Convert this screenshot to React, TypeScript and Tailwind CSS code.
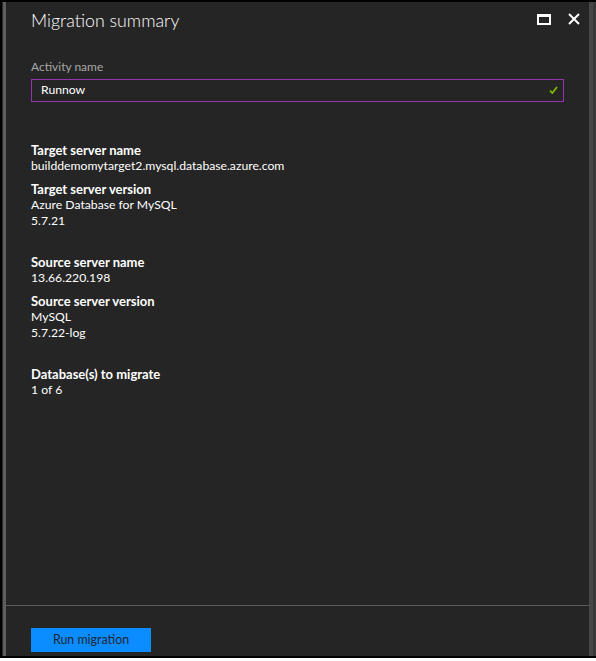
import React from "react";

type Field = { label: string; values: string[] };

const sections: Field[][] = [
  [
    { label: "Target server name", values: ["builddemomytarget2.mysql.database.azure.com"] },
    { label: "Target server version", values: ["Azure Database for MySQL", "5.7.21"] },
  ],
  [
    { label: "Source server name", values: ["13.66.220.198"] },
    { label: "Source server version", values: ["MySQL", "5.7.22-log"] },
  ],
  [{ label: "Database(s) to migrate", values: ["1 of 6"] }],
];

function SummaryField({ field }: { field: Field }) {
  return (
    <div className="flex flex-col">
      <div className="text-[13px] font-bold text-white">{field.label}</div>
      {field.values.map((v) => (
        <div key={v} className="text-[12.2px] text-white">
          {v}
        </div>
      ))}
    </div>
  );
}

export default function App() {
  return (
    <div
      className="flex h-[661px] w-[596px] flex-col bg-black"
      style={{ fontFamily: "Lato, 'Open Sans', sans-serif" }}
    >
      <div className="flex min-h-0 flex-1 pl-[2px] pt-[2px]">
        <div className="w-[1px] bg-[#2a2a2a]" />
        <div className="w-[3px] bg-[#5e5e5e]" />

        <main className="flex min-w-0 flex-1 flex-col bg-[#252525]">
          {/* header */}
          <div className="flex items-start pl-[25px] pr-[9px] pt-[4px]">
            <h1 className="flex-1 text-[17.8px] font-light leading-[28px] text-white">
              Migration summary
            </h1>
            <div className="mt-[7px] flex items-center gap-[17px]">
              <div className="h-[11px] w-[14px] border-2 border-t-[3px] border-white" />
              <svg width="12" height="12" viewBox="0 0 12 12">
                <path d="M1 1 L11 11 M11 1 L1 11" stroke="#fff" strokeWidth="2" />
              </svg>
            </div>
          </div>

          <div className="flex flex-1 flex-col px-[25px] text-[13px] leading-[16px]">
            <label className="mt-[25px] text-[12px] text-[#a8a8a8]">Activity name</label>
            <div className="mt-[4px] flex h-[23px] items-center border border-[#9236ad] pb-[1px] pl-[9px] pr-[5px]">
              <span className="flex-1 text-[12.2px] text-white">Runnow</span>
              <svg width="9" height="8" viewBox="0 0 9 8">
                <path d="M1 4.5 L3.3 7 L8 1" stroke="#7fba00" strokeWidth="1.8" fill="none" />
              </svg>
            </div>

            <div className="mt-[40px] flex flex-col gap-[25px]">
              {sections.map((group, i) => (
                <div key={i} className="flex flex-col gap-[7px]">
                  {group.map((f) => (
                    <SummaryField key={f.label} field={f} />
                  ))}
                </div>
              ))}
            </div>
          </div>

          <div className="h-[1px] bg-[#5a5a5a]" />
          <div className="h-[50px] px-[25px] pt-[20px]">
            <button className="h-[24px] w-[120px] bg-[#0b8cff] text-[12.4px] text-[#1e2630]">
              Run migration
            </button>
          </div>
        </main>

        <div className="w-[4px] bg-[#474747]" />
        <div className="w-[3px] bg-[#393939]" />
      </div>
      <div className="h-[2px] bg-black" />
      <div className="h-[3px] bg-white" />
    </div>
  );
}
